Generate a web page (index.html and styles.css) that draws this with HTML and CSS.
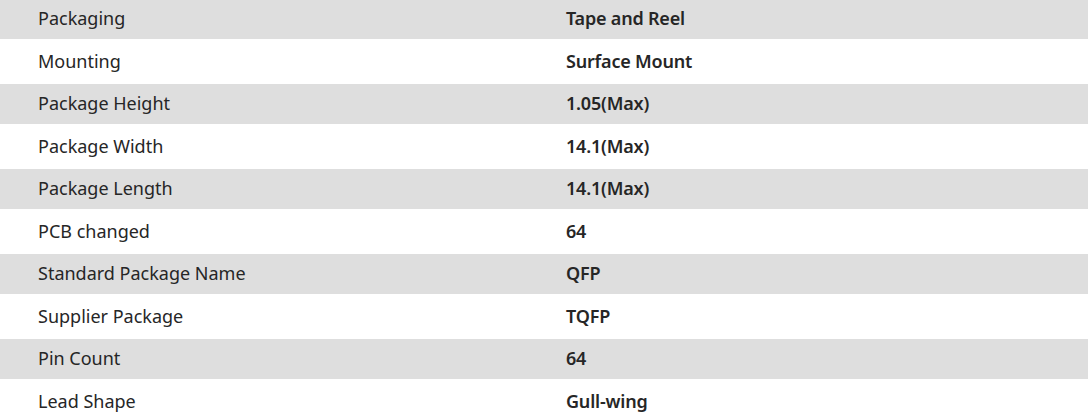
FILE: index.html
```html
<!DOCTYPE html>
<html>
<head>
<meta charset="utf-8">
<link rel="stylesheet" href="styles.css">
</head>
<body>
<table class="specs">
  <tbody>
    <tr class="row odd"><td class="label">Packaging</td><td class="value">Tape and Reel</td></tr>
    <tr class="row even"><td class="label">Mounting</td><td class="value">Surface Mount</td></tr>
    <tr class="row odd"><td class="label">Package Height</td><td class="value">1.05(Max)</td></tr>
    <tr class="row even"><td class="label">Package Width</td><td class="value">14.1(Max)</td></tr>
    <tr class="row odd"><td class="label">Package Length</td><td class="value">14.1(Max)</td></tr>
    <tr class="row even"><td class="label">PCB changed</td><td class="value">64</td></tr>
    <tr class="row odd"><td class="label">Standard Package Name</td><td class="value">QFP</td></tr>
    <tr class="row even"><td class="label">Supplier Package</td><td class="value">TQFP</td></tr>
    <tr class="row odd"><td class="label">Pin Count</td><td class="value">64</td></tr>
    <tr class="row even"><td class="label">Lead Shape</td><td class="value">Gull-wing</td></tr>
  </tbody>
</table>
</body>
</html>
```
FILE: styles.css
```css
html, body {
  margin: 0;
  padding: 0;
  background: #ffffff;
}
body {
  font-family: "Noto Sans", "Open Sans", sans-serif;
  font-size: 18px;
  color: #262626;
}
.specs {
  width: 100%;
  border-collapse: collapse;
  margin-top: -1px;
}
.row.odd {
  background: #dedede;
  height: 40px;
}
.row.even {
  background: #ffffff;
  height: 45px;
}
.specs td {
  padding: 0 0 2px 0;
  vertical-align: middle;
}
.label {
  width: 566px;
  padding-left: 38px !important;
  box-sizing: border-box;
  font-weight: 400;
}
.value {
  font-weight: 600;
  letter-spacing: -0.2px;
}
```
